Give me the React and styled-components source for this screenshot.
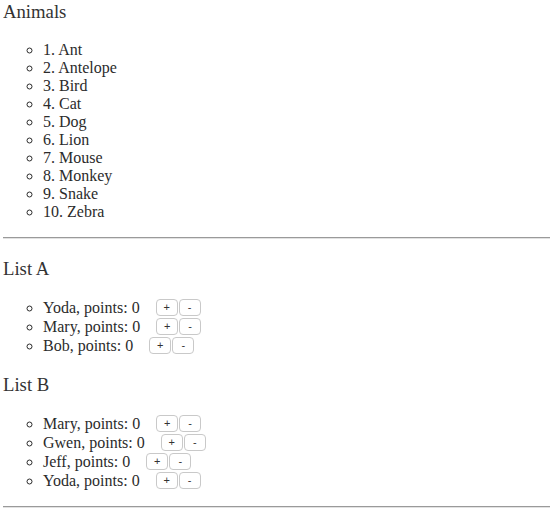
import React from "react";
import styled, { createGlobalStyle } from "styled-components";

const Global = createGlobalStyle`
  html, body { background: #fff; }
  body {
    margin: 1px 0 0 3px;
    font-family: "Liberation Serif", "Times New Roman", serif;
    font-size: 16px;
    color: #2b2b2b;
  }
`;

const Section = styled.section``;

const Title = styled.h3`
  font-size: 18.72px;
  font-weight: normal;
  margin: ${(p) => (p.$first ? "0" : "18.72px")} 0 18.72px;
  line-height: 21.5px;
  color: #333;
`;

const List = styled.ul`
  list-style: circle;
  margin: 16px 0;
  padding-left: 40px;
`;

const Item = styled.li`
  line-height: 18px;
`;

const PlayerItem = styled.li`
  height: 19px;
`;

const Row = styled.div`
  display: flex;
  align-items: flex-start;
  height: 19px;
`;

const Name = styled.span`
  line-height: 19px;
`;

const Controls = styled.span`
  display: flex;
  gap: 1px;
  margin: 1px 0 0 16px;
`;

const Btn = styled.button`
  box-sizing: border-box;
  width: 22px;
  height: 17px;
  padding: 0 0 1px;
  display: flex;
  align-items: center;
  justify-content: center;
  font-family: "Liberation Sans", Arial, sans-serif;
  font-size: 11px;
  background: #fff;
  color: #333;
  border: 1px solid #c9c9c9;
  border-radius: 4px;
`;

const Rule = styled.hr`
  margin: 0;
  border: none;
  border-top: 1px solid #9a9a9a;
  border-bottom: 1px solid #e2e2e2;
`;

const animals = ["Ant", "Antelope", "Bird", "Cat", "Dog", "Lion", "Mouse", "Monkey", "Snake", "Zebra"];
const listA = ["Yoda", "Mary", "Bob"];
const listB = ["Mary", "Gwen", "Jeff", "Yoda"];

function PlayerList({ title, names }) {
  return (
    <Section>
      <Title>{title}</Title>
      <List>
        {names.map((n) => (
          <PlayerItem key={n}>
            <Row>
              <Name>{n}, points: 0</Name>
              <Controls>
                <Btn>+</Btn>
                <Btn>-</Btn>
              </Controls>
            </Row>
          </PlayerItem>
        ))}
      </List>
    </Section>
  );
}

export default function App() {
  return (
    <>
      <Global />
      <Section>
        <Title $first>Animals</Title>
        <List>
          {animals.map((a, i) => (
            <Item key={a}>
              {i + 1}. {a}
            </Item>
          ))}
        </List>
      </Section>
      <Rule />
      <PlayerList title="List A" names={listA} />
      <PlayerList title="List B" names={listB} />
      <Rule />
    </>
  );
}
